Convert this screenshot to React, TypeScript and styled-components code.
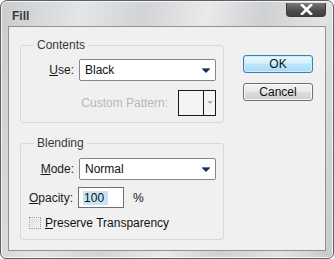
import styled, { createGlobalStyle } from 'styled-components'

const Global = createGlobalStyle`
  html, body {
    margin: 0;
    padding: 0;
    background: #ffffff;
  }
  body {
    font-family: 'Liberation Sans', Arial, sans-serif;
  }
`

const Frame = styled.div`
  box-sizing: border-box;
  width: 334px;
  height: 259px;
  border: 1px solid #5c5f63;
  border-radius: 7px 7px 6px 6px;
  background: linear-gradient(100deg, #c9cbcd 0%, #e4e5e6 22%, #d2d3d5 38%, #eaeaeb 55%, #cfd0d2 70%, #e2e3e4 86%, #c6c8ca 100%);
  box-shadow: inset 0 0 0 1px #f4f5f6;
  display: flex;
  flex-direction: column;
  overflow: hidden;
`

const TitleBar = styled.div`
  height: 25px;
  display: flex;
  align-items: flex-start;
  justify-content: space-between;
  padding: 0 7px 0 11px;
  box-sizing: border-box;
`

const Title = styled.span`
  margin-top: 8px;
  font: bold 12px 'Liberation Sans', Arial, sans-serif;
  color: #3a3a3a;
`

const CloseButton = styled.div`
  margin-top: 2px;
  width: 40px;
  height: 14px;
  box-sizing: border-box;
  border: 1px solid #3a3a3a;
  border-top: none;
  border-radius: 0 0 4px 4px;
  background: linear-gradient(#7a7a7a, #4e4e4e 55%, #3e3e3e);
  display: flex;
  align-items: center;
  justify-content: center;
`

const Client = styled.div`
  flex: 1;
  margin: 0 7px 7px 7px;
  border: 1px solid #8f9295;
  background: #f0f0f0;
  display: flex;
  gap: 19px;
  padding: 11px 12px 0 11px;
`

const LeftColumn = styled.div`
  width: 204px;
  display: flex;
  flex-direction: column;
  gap: 13px;
`

const Group = styled.fieldset`
  margin: 0;
  padding: 0;
  border: 1px solid #d5d9dc;
  border-radius: 3px;
  min-width: 0;
`

const Legend = styled.legend`
  margin-left: 13px;
  padding: 0 3px;
  font-size: 12px;
  line-height: 14px;
  color: #3a3a3a;
`

const GroupBody = styled.div<{ $top: number; $bottom: number }>`
  display: flex;
  flex-direction: column;
  gap: 7px;
  padding: ${(p) => p.$top}px 7px ${(p) => p.$bottom}px 0;
`

const Row = styled.div`
  display: grid;
  grid-template-columns: 53px 1fr;
  column-gap: 5px;
  align-items: center;
`

const Label = styled.label`
  font-size: 12px;
  color: #1a1a1a;
  text-align: right;
  white-space: nowrap;
`

const Select = styled.div`
  height: 22px;
  box-sizing: border-box;
  border: 1px solid #828790;
  border-radius: 2px;
  background: #ffffff;
  display: flex;
  align-items: center;
  justify-content: space-between;
  padding: 0 5px 0 5px;
  font-size: 12px;
  color: #111;
`

const Arrow = styled.svg`
  width: 8px;
  height: 5px;
`

const PatternRow = styled.div`
  display: flex;
  justify-content: flex-end;
  align-items: center;
  gap: 10px;
  padding-top: 2px;
`

const DisabledLabel = styled.span`
  font-size: 12px;
  color: #b8b8b8;
`

const PatternBox = styled.div`
  width: 38px;
  height: 26px;
  box-sizing: border-box;
  border: 1px solid #1a1a1a;
  display: flex;
  background: #f4f4f4;
`

const PatternSwatch = styled.div`
  flex: 1;
  border-right: 1px solid #1a1a1a;
`

const PatternDrop = styled.div`
  width: 11px;
  display: flex;
  align-items: center;
  justify-content: center;
`

const OpacityRow = styled.div`
  display: flex;
  align-items: center;
  padding-left: 8px;
`

const OpacityField = styled.div`
  margin-left: 5px;
  width: 46px;
  height: 21px;
  box-sizing: border-box;
  border: 1px solid #6f6f6f;
  background: #ffffff;
  display: flex;
  align-items: center;
  padding-left: 4px;
`

const Selected = styled.span`
  background: #c5e5f5;
  font-size: 12px;
  line-height: 14px;
  padding: 0 4px 0 1px;
  color: #111;
`

const Percent = styled.span`
  margin-left: 9px;
  font-size: 12px;
  color: #111;
`

const CheckRow = styled.div`
  display: flex;
  align-items: center;
  gap: 4px;
  padding: 1px 0 0 8px;
  font-size: 12px;
  color: #111;
`

const CheckBox = styled.span`
  width: 12px;
  height: 12px;
  box-sizing: border-box;
  border: 1px dotted #9aa0a6;
  background: linear-gradient(135deg, #d7dde2, #f2f4f6);
  box-shadow: inset 0 0 0 1px #eef0f2;
`

const RightColumn = styled.div`
  display: flex;
  flex-direction: column;
  gap: 10px;
  padding-top: 17px;
`

const Button = styled.div<{ $primary?: boolean }>`
  width: 70px;
  height: 18px;
  box-sizing: border-box;
  border: 1px solid ${(p) => (p.$primary ? '#3c7fb1' : '#707070')};
  border-radius: 3px;
  background: ${(p) =>
    p.$primary
      ? 'linear-gradient(#eaf6fd 0%, #d9f0fc 45%, #bee6fd 50%, #a7d9f5 100%)'
      : 'linear-gradient(#f2f2f2 0%, #ebebeb 45%, #dddddd 50%, #cfcfcf 100%)'};
  box-shadow: inset 0 0 0 1px ${(p) => (p.$primary ? '#c9ecfc' : '#fafafa')};
  display: flex;
  align-items: center;
  justify-content: center;
  font-size: 12px;
  color: #111;
`

const DropArrow = () => (
  <Arrow viewBox="0 0 8 5">
    <rect x="0" y="0" width="8" height="1" fill="#5b7fb5" />
    <polygon points="0,1 8,1 4,5" fill="#1c2f52" />
  </Arrow>
)

export default function App() {
  return (
    <>
      <Global />
      <Frame>
        <TitleBar>
          <Title>Fill</Title>
          <CloseButton>
            <svg width="13" height="11" viewBox="0 0 13 11">
              <path d="M2 1 L11 10 M11 1 L2 10" stroke="#ffffff" strokeWidth="2.6" strokeLinecap="square" />
            </svg>
          </CloseButton>
        </TitleBar>
        <Client>
          <LeftColumn>
            <Group>
              <Legend>Contents</Legend>
              <GroupBody $top={7} $bottom={6}>
                <Row>
                  <Label>
                    <u>U</u>se:
                  </Label>
                  <Select>
                    Black
                    <DropArrow />
                  </Select>
                </Row>
                <PatternRow>
                  <DisabledLabel>Custom Pattern:</DisabledLabel>
                  <PatternBox>
                    <PatternSwatch />
                    <PatternDrop>
                      <svg width="6" height="4" viewBox="0 0 6 4">
                        <polygon points="0,0 6,0 3,3" fill="#b0b0b0" />
                      </svg>
                    </PatternDrop>
                  </PatternBox>
                </PatternRow>
              </GroupBody>
            </Group>
            <Group>
              <Legend>Blending</Legend>
              <GroupBody $top={8} $bottom={9}>
                <Row>
                  <Label>
                    <u>M</u>ode:
                  </Label>
                  <Select>
                    Normal
                    <DropArrow />
                  </Select>
                </Row>
                <OpacityRow>
                  <Label>
                    <u>O</u>pacity:
                  </Label>
                  <OpacityField>
                    <Selected>100</Selected>
                  </OpacityField>
                  <Percent>%</Percent>
                </OpacityRow>
                <CheckRow>
                  <CheckBox />
                  <span>
                    <u>P</u>reserve Transparency
                  </span>
                </CheckRow>
              </GroupBody>
            </Group>
          </LeftColumn>
          <RightColumn>
            <Button $primary>OK</Button>
            <Button>Cancel</Button>
          </RightColumn>
        </Client>
      </Frame>
    </>
  )
}
